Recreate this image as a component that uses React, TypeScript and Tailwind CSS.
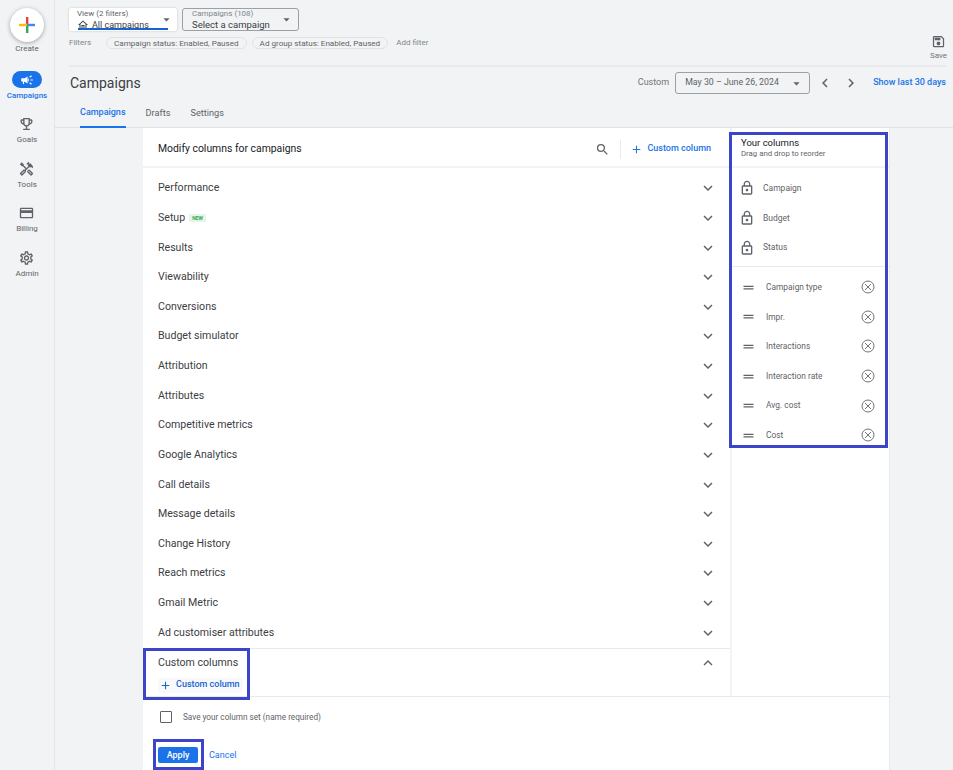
import {
  MdAdd,
  MdArrowDropDown,
  MdCampaign,
  MdChevronLeft,
  MdChevronRight,
  MdDragHandle,
  MdKeyboardArrowDown,
  MdKeyboardArrowUp,
  MdLockOutline,
  MdOutlineCreditCard,
  MdOutlineEmojiEvents,
  MdOutlineHandyman,
  MdOutlineHome,
  MdOutlineSave,
  MdOutlineSettings,
  MdSearch,
} from 'react-icons/md'
import type { IconType } from 'react-icons'

const NAV_ITEMS: { label: string; icon: IconType }[] = [
  { label: 'Goals', icon: MdOutlineEmojiEvents },
  { label: 'Tools', icon: MdOutlineHandyman },
  { label: 'Billing', icon: MdOutlineCreditCard },
  { label: 'Admin', icon: MdOutlineSettings },
]

const SECTIONS = [
  'Performance',
  'Setup',
  'Results',
  'Viewability',
  'Conversions',
  'Budget simulator',
  'Attribution',
  'Attributes',
  'Competitive metrics',
  'Google Analytics',
  'Call details',
  'Message details',
  'Change History',
  'Reach metrics',
  'Gmail Metric',
  'Ad customiser attributes',
]

const LOCKED = ['Campaign', 'Budget', 'Status']
const SELECTED = ['Campaign type', 'Impr.', 'Interactions', 'Interaction rate', 'Avg. cost', 'Cost']

function RemoveIcon() {
  return (
    <svg width="14" height="14" viewBox="0 0 14 14" fill="none" stroke="#70757a" strokeWidth="1">
      <circle cx="7" cy="7" r="6" />
      <path d="M4 4l6 6M10 4l-6 6" />
    </svg>
  )
}

function Sidebar() {
  return (
    <aside className="flex w-[55px] shrink-0 flex-col items-center border-r border-[#e3e5e8] bg-[#f1f3f4]">
      <div className="mt-[8px] flex h-[34px] w-[34px] items-center justify-center rounded-full bg-white shadow-[0_1px_4px_rgba(60,64,67,0.45)]">
        <svg width="16" height="16" viewBox="0 0 16 16">
          <rect x="7" y="0" width="2.4" height="8" fill="#ea4335" />
          <rect x="7" y="8" width="2.4" height="8" fill="#34a853" />
          <rect x="0" y="6.8" width="8" height="2.4" fill="#fbbc04" />
          <rect x="8" y="6.8" width="8" height="2.4" fill="#4285f4" />
        </svg>
      </div>
      <span className="mt-[1px] text-[8px] leading-[12px] text-[#5f6368]">Create</span>

      <div className="mt-[16px] flex h-[17px] w-[30px] items-center justify-center rounded-full bg-[#1a73e8]">
        <MdCampaign className="text-[14px] text-white" />
      </div>
      <span className="mt-[2px] text-[8px] leading-[12px] font-medium text-[#1a73e8]">Campaigns</span>

      <div className="mt-[14px] flex flex-col gap-[14.5px]">
        {NAV_ITEMS.map(({ label, icon: Icon }) => (
          <div key={label} className="flex h-[30px] flex-col items-center">
            <Icon className="h-[17px] w-[17px] text-[#5f6368]" />
            <span className="mt-[2px] text-[8px] leading-[12px] text-[#5f6368]">{label}</span>
          </div>
        ))}
      </div>
    </aside>
  )
}

function FilterChip({ children }: { children: string }) {
  return (
    <span className="flex h-[12px] items-center rounded-full border border-[#e0e2e5] px-[7px] text-[8.1px] whitespace-nowrap text-[#5f6368]">
      {children}
    </span>
  )
}

function TopBar() {
  return (
    <div className="relative h-[67px] border-b-2 border-[#e8eaed]">
      <div className="flex gap-[5px] pt-[8px]">
        <div className="relative h-[23px] w-[108px] overflow-hidden rounded-[2px] bg-white pl-[8px] shadow-[0_0_2px_rgba(60,64,67,0.3)]">
          <div className="pt-[1px] text-[8px] leading-[10px] text-[#5f6368]">View (2 filters)</div>
          <div className="flex items-center gap-[3px] text-[9px] leading-[12px] text-[#3c4043]">
            <MdOutlineHome className="text-[12px]" />
            All campaigns
          </div>
          <MdArrowDropDown className="absolute top-[4px] right-[3px] text-[15px] text-[#5f6368]" />
          <div className="absolute right-[9px] bottom-[1px] left-[9px] h-[2px] bg-[#1a62d0]" />
        </div>
        <div className="relative h-[23px] w-[117px] rounded-[3px] border border-[#9aa0a6] pl-[9px]">
          <div className="text-[8px] leading-[10px] text-[#80868b]">Campaigns (108)</div>
          <div className="text-[9.5px] leading-[11px] text-[#3c4043]">Select a campaign</div>
          <MdArrowDropDown className="absolute top-[3px] right-[4px] text-[15px] text-[#5f6368]" />
        </div>
      </div>
      <div className="mt-[6px] flex items-center text-[8px] text-[#80868b]">
        <span className="mr-[15px]">Filters</span>
        <FilterChip>Campaign status: Enabled, Paused</FilterChip>
        <span className="w-[5px]" />
        <FilterChip>Ad group status: Enabled, Paused</FilterChip>
        <span className="ml-[8px]">Add filter</span>
      </div>
      <div className="absolute top-[34px] right-[-1px] flex w-[17px] flex-col items-center">
        <MdOutlineSave className="text-[15px] text-[#5f6368]" />
        <span className="mt-[1px] text-[8px] leading-[11px] text-[#70757a]">Save</span>
      </div>
    </div>
  )
}

function TitleBar() {
  return (
    <div className="flex h-[32px] items-center">
      <h1 className="flex-1 pl-[1px] text-[14px] font-normal text-[#3c4043]">Campaigns</h1>
      <span className="mr-[6px] text-[9px] text-[#70757a]">Custom</span>
      <div className="flex h-[22px] w-[135px] items-center justify-between rounded-[3px] border border-[#9aa0a6] pr-[5px] pl-[9px] text-[8.8px] text-[#5f6368]">
        May 30 – June 26, 2024
        <MdArrowDropDown className="text-[15px]" />
      </div>
      <MdChevronLeft className="ml-[6px] text-[18px] text-[#5f6368]" />
      <MdChevronRight className="ml-[8px] text-[18px] text-[#5f6368]" />
      <span className="ml-[13px] text-[9px] font-medium text-[#1a73e8]">Show last 30 days</span>
    </div>
  )
}

function Tabs() {
  return (
    <div className="flex h-[28px] gap-[20px] pl-[11px] text-[9.2px]">
      <div className="relative pt-[7px] text-[9px] font-medium text-[#1a73e8]">
        Campaigns
        <div className="absolute right-0 bottom-[-1px] left-0 h-[2px] bg-[#1a73e8]" />
      </div>
      <div className="pt-[7px] text-[#5f6368]">Drafts</div>
      <div className="pt-[7px] text-[#5f6368]">Settings</div>
    </div>
  )
}

function SectionRow({ label }: { label: string }) {
  return (
    <div className="flex h-[29.63px] items-center justify-between pr-[13px] pl-[15px] text-[10.6px] text-[#3c4043]">
      <div className="flex items-center gap-[4px]">
        {label}
        {label === 'Setup' && (
          <span className="rounded-[1px] bg-[#e6f4ea] px-[3px] text-[5px] leading-[8px] font-bold text-[#34a853]">
            NEW
          </span>
        )}
      </div>
      <MdKeyboardArrowDown className="text-[18px] text-[#5f6368]" />
    </div>
  )
}

function ColumnPicker() {
  return (
    <div className="flex w-[589px] shrink-0 flex-col border-r-2 border-[#f1f3f4]">
      <div className="flex h-[40px] shrink-0 items-center border-b-2 border-[#f1f3f4] pt-[4px] pr-[19px] pl-[15px]">
        <h2 className="flex-1 text-[10.4px] font-normal text-[#202124]">Modify columns for campaigns</h2>
        <MdSearch className="text-[15px] text-[#5f6368]" />
        <div className="mr-[9px] ml-[10px] h-[19px] w-px bg-[#e8eaed]" />
        <MdAdd className="text-[13px] text-[#1a73e8]" />
        <span className="ml-[4px] text-[9px] font-medium whitespace-nowrap text-[#1a73e8]">Custom column</span>
      </div>
      <div className="pt-[5.5px]">
        {SECTIONS.map((label) => (
          <SectionRow key={label} label={label} />
        ))}
      </div>
      <div className="flex-1 border-t border-[#e8eaed] pr-[13px] pl-[15px]">
        <div className="flex h-[29px] items-center justify-between text-[10.6px] text-[#3c4043]">
          Custom columns
          <MdKeyboardArrowUp className="text-[18px] text-[#5f6368]" />
        </div>
        <div className="flex h-[15px] w-[85px] items-center rounded-[2px] bg-[#f8f9fa] pl-[1px] text-[9px] font-medium whitespace-nowrap text-[#1a62d0]">
          <MdAdd className="mr-[4px] text-[13px]" />
          Custom column
        </div>
      </div>
    </div>
  )
}

function YourColumns() {
  return (
    <div className="flex flex-1 flex-col">
      <div className="h-[40px] shrink-0 border-b-2 border-[#f1f3f4] pt-[9px] pl-[9px]">
        <div className="text-[9.5px] leading-[11px] font-normal text-[#202124]">Your columns</div>
        <div className="text-[7.8px] leading-[11px] text-[#5f6368]">Drag and drop to reorder</div>
      </div>
      <div className="border-b border-[#e8eaed] pt-[5.5px] pb-[4px]">
        {LOCKED.map((name) => (
          <div key={name} className="flex h-[29.63px] items-center pl-[7px] text-[8.5px] text-[#5f6368]">
            <MdLockOutline className="text-[16px] text-[#5f6368]" />
            <span className="ml-[8px]">{name}</span>
          </div>
        ))}
      </div>
      <div className="pt-[5px]">
        {SELECTED.map((name) => (
          <div key={name} className="flex h-[29.63px] items-center pr-[14px] pl-[9px] text-[8.4px] text-[#5f6368]">
            <MdDragHandle className="text-[15px] text-[#5f6368]" />
            <span className="ml-[10px] flex-1">{name}</span>
            <RemoveIcon />
          </div>
        ))}
      </div>
    </div>
  )
}

export default function App() {
  return (
    <div className="relative flex h-[770px] w-[953px] overflow-hidden bg-[#f1f3f4] font-[family-name:Roboto,sans-serif]">
      <Sidebar />
      <main className="flex min-w-0 flex-1 flex-col">
        <div className="border-b border-[#e0e2e5] pl-[14px]">
          <div className="pr-[7px]">
            <TopBar />
            <TitleBar />
            <Tabs />
          </div>
        </div>
        <div className="min-h-0 flex-1 pr-[63px] pl-[88px]">
          <div className="flex h-full flex-col border-r border-[#e8eaed] bg-white">
            <div className="flex h-[569px] shrink-0 border-b border-[#e8eaed]">
              <ColumnPicker />
              <YourColumns />
            </div>
            <div className="pl-[17px]">
              <div className="mt-[14px] flex items-center">
                <span className="h-[12px] w-[12px] rounded-[1px] border-[1.5px] border-[#5f6368]" />
                <span className="ml-[11px] text-[8.2px] text-[#5f6368]">Save your column set (name required)</span>
              </div>
              <div className="mt-[24px] ml-[-2px] flex items-center">
                <button className="h-[16px] w-[40px] rounded-[2px] bg-[#1a73e8] text-[9px] font-medium text-white">
                  Apply
                </button>
                <span className="ml-[11px] text-[9px] text-[#1a73e8]">Cancel</span>
              </div>
            </div>
          </div>
        </div>
      </main>

      {/* annotation frames drawn on top of the screenshot */}
      <div className="pointer-events-none absolute top-[132px] left-[729px] h-[316px] w-[159px] border-[3px] border-[#3c45c8]" />
      <div className="pointer-events-none absolute top-[648px] left-[143px] h-[52px] w-[107px] border-[3px] border-[#3c45c8]" />
      <div className="pointer-events-none absolute top-[739px] left-[153px] h-[31px] w-[51px] border-[3px] border-[#3c45c8]" />
    </div>
  )
}
